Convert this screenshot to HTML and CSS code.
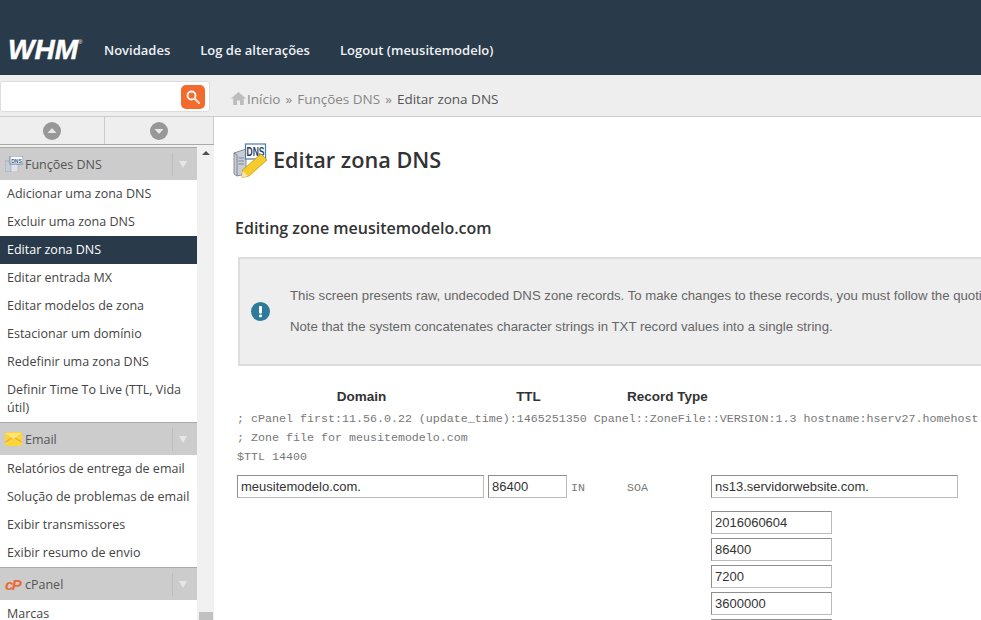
FILE: index.html
```html
<!DOCTYPE html>
<html>
    <head>
        <title>WHM - Editar zona DNS</title>
        <meta charset="UTF-8">
        <link rel="stylesheet" href="styles.css">
    </head>
    <body>
        <header class="topbar">
            <div class="logo">WHM<sup>®</sup></div>
            <nav class="topnav">
                <a>Novidades</a>
                <a>Log de alterações</a>
                <a>Logout (meusitemodelo)</a>
            </nav>
        </header>

        <div class="layout">
            <aside class="sidebar">
                <div class="search">
                    <div class="search-box">
                        <span class="search-btn">
                            <svg width="16" height="16" viewBox="0 0 16 16">
                                <circle cx="6.500" cy="6.500" r="4" fill="none" stroke="#fff" stroke-width="1.800"/>
                                <path d="M9.700 9.700 L14 14" stroke="#f5d9c4" stroke-width="2.400" stroke-linecap="round"/>
                            </svg>
                        </span>
                    </div>
                </div>
                <div class="arrows">
                    <span class="arrow-cell">
                        <svg width="18" height="18" viewBox="0 0 18 18"><circle cx="9" cy="9" r="9" fill="#979797"/><path d="M4.500 11 L9 6 L13.500 11 Z" fill="#e6e6e6"/></svg>
                    </span>
                    <span class="arrow-cell">
                        <svg width="18" height="18" viewBox="0 0 18 18"><circle cx="9" cy="9" r="9" fill="#979797"/><path d="M4.500 7 L9 12 L13.500 7 Z" fill="#e6e6e6"/></svg>
                    </span>
                </div>
                <div class="menu-wrap">
                    <div class="menu">
                        <div class="group">
                            <svg class="group-icon" width="18" height="16" viewBox="0 0 18 16">
                                <rect x="0" y="5" width="7" height="11" fill="#c4ccd6" stroke="#8f9aa8" stroke-width="0.600"/>
                                <rect x="6" y="8" width="7" height="8" fill="#dfe4ea" stroke="#a0a8b2" stroke-width="0.600"/>
                                <rect x="5" y="0" width="13" height="8" fill="#fff" stroke="#50719a" stroke-width="0.800"/>
                                <text x="11.500" y="6.500" class="dns-mini">DNS</text>
                            </svg>
                            <span class="group-name">Funções DNS</span>
                            <span class="group-toggle"></span>
                        </div>
                        <a class="item">Adicionar uma zona DNS</a>
                        <a class="item">Excluir uma zona DNS</a>
                        <a class="item active">Editar zona DNS</a>
                        <a class="item">Editar entrada MX</a>
                        <a class="item">Editar modelos de zona</a>
                        <a class="item">Estacionar um domínio</a>
                        <a class="item">Redefinir uma zona DNS</a>
                        <a class="item">Definir Time To Live (TTL, Vida útil)</a>
                        <div class="group">
                            <svg class="group-icon" width="18" height="14" viewBox="0 0 18 14">
                                <rect x="0" y="0" width="17" height="14" rx="2" fill="#fbd53c"/>
                                <path d="M0.500 10 L8.500 5 L16.500 10" fill="none" stroke="#f3a92e" stroke-width="1.300"/>
                                <path d="M0.500 1 L8.500 7 L16.500 1" fill="#ffe27a"/>
                            </svg>
                            <span class="group-name">Email</span>
                            <span class="group-toggle"></span>
                        </div>
                        <a class="item">Relatórios de entrega de email</a>
                        <a class="item">Solução de problemas de email</a>
                        <a class="item">Exibir transmissores</a>
                        <a class="item">Exibir resumo de envio</a>
                        <div class="group">
                            <span class="cp-logo">cP</span>
                            <span class="group-name">cPanel</span>
                            <span class="group-toggle"></span>
                        </div>
                        <a class="item">Marcas</a>
                    </div>
                    <div class="scrollbar">
                        <span class="scroll-up"></span>
                        <span class="scroll-thumb"></span>
                    </div>
                </div>
            </aside>

            <main class="main">
                <div class="breadcrumb">
                    <svg width="15" height="13" viewBox="0 0 15 13">
                        <path d="M7.500 0 L15 6.500 L12.800 6.500 L12.800 13 L9 13 L9 8.500 L6 8.500 L6 13 L2.200 13 L2.200 6.500 L0 6.500 Z" fill="#bdbdbd"/>
                    </svg>
                    <a>Início</a><span class="sep">»</span><a>Funções DNS</a><span class="sep">»</span><span class="current">Editar zona DNS</span>
                </div>

                <div class="content">
                    <div class="title">
                        <svg width="35" height="35" viewBox="0 0 35 35">
                            <path d="M1 10 L13 6 L13 31 L4 33 L1 31 Z" fill="#c9ced6" stroke="#6f7782" stroke-width="0.800"/>
                            <path d="M1 10 L4 12 L4 33" fill="none" stroke="#6f7782" stroke-width="0.800"/>
                            <path d="M5.500 15 H11 M5.500 18 H11 M5.500 21 H11" stroke="#7d8794" stroke-width="1"/>
                            <rect x="12.500" y="1" width="20" height="15" fill="#fff" stroke="#4d7ba8" stroke-width="1.200"/>
                            <text x="13.500" y="13" class="dns-big" textLength="18" lengthAdjust="spacingAndGlyphs">DNS</text>
                            <path d="M28 11 L34 17 L16 33 L9 34.500 L9.500 27 Z" fill="#f6cb2c" stroke="#c99a12" stroke-width="0.800"/>
                            <path d="M9.500 28 L9 34.500 L15 33 Z" fill="#f5e6bd"/>
                        </svg>
                        <h1>Editar zona DNS</h1>
                    </div>

                    <h2>Editing zone meusitemodelo.com</h2>

                    <div class="message">
                        <svg class="message-icon" width="19" height="19" viewBox="0 0 19 19">
                            <circle cx="9.500" cy="9.500" r="9.500" fill="#2e7a9a"/>
                            <rect x="8" y="4" width="3" height="7.500" rx="1" fill="#fff"/>
                            <rect x="8" y="12.500" width="3" height="2.800" rx="1" fill="#fff"/>
                        </svg>
                        <div class="message-text">
                            <p>This screen presents raw, undecoded DNS zone records. To make changes to these records, you must follow the quoting rules.</p>
                            <p>Note that the system concatenates character strings in TXT record values into a single string.</p>
                        </div>
                    </div>

                    <div class="zone-head">
                        <span>Domain</span>
                        <span>TTL</span>
                        <span></span>
                        <span class="type-head">Record Type</span>
                    </div>

                    <div class="raw">; cPanel first:11.56.0.22 (update_time):1465251350 Cpanel::ZoneFile::VERSION:1.3 hostname:hserv27.homehost.com.br</div>
                    <div class="raw">; Zone file for meusitemodelo.com</div>
                    <div class="raw">$TTL 14400</div>

                    <div class="zone-row">
                        <input class="field wide" type="text" value="meusitemodelo.com.">
                        <input class="field ttl" type="text" value="86400">
                        <span class="raw-cell">IN</span>
                        <span class="raw-cell">SOA</span>
                        <div class="record">
                            <input class="field wide" type="text" value="ns13.servidorwebsite.com.">
                            <div class="soa-values">
                                <input class="field short" type="text" value="2016060604">
                                <input class="field short" type="text" value="86400">
                                <input class="field short" type="text" value="7200">
                                <input class="field short" type="text" value="3600000">
                                <input class="field short" type="text" value="86400">
                            </div>
                        </div>
                    </div>
                </div>
            </main>
        </div>
    </body>
</html>
```

FILE: styles.css
```css
html, body {
    height: 100%;
}

body {
    margin: 0;
    height: 620px;
    overflow: hidden;
    display: flex;
    flex-direction: column;
    font-family: "Open Sans", Arial, sans-serif;
    background: #fff;
    color: #333;
}

.topbar {
    height: 75px;
    flex: none;
    display: flex;
    align-items: flex-end;
    background: #293a4a;
    color: #fff;
    box-sizing: border-box;
    padding: 0 0 12px 8px;
}

.logo {
    width: 96px;
    font-family: "Liberation Sans", Arial, sans-serif;
    font-size: 28px;
    font-weight: bold;
    font-style: italic;
    line-height: 26px;
    -webkit-text-stroke: 0.5px #fff;
}

.logo sup {
    font-size: 6px;
    font-style: normal;
    font-weight: normal;
    line-height: 0;
    vertical-align: 15px;
    -webkit-text-stroke: 0;
}

.topnav {
    display: flex;
    gap: 30px;
    font-size: 13px;
    font-weight: 600;
    line-height: 26px;
    color: #eef1f3;
}

.layout {
    flex: 1;
    display: flex;
    min-height: 0;
}

.sidebar {
    width: 214px;
    flex: none;
    display: flex;
    flex-direction: column;
    background: #f1f1f1;
}

.search {
    height: 42px;
    flex: none;
    box-sizing: border-box;
    padding: 6px 4px 5px 0;
    background: #eee;
    border-bottom: 1px solid #ccc;
}

.search-box {
    height: 31px;
    box-sizing: border-box;
    display: flex;
    justify-content: flex-end;
    align-items: center;
    padding-right: 4px;
    background: #fff;
    border: 1px solid #ddd;
    border-radius: 3px;
}

.search-btn {
    width: 24px;
    height: 24px;
    display: flex;
    align-items: center;
    justify-content: center;
    background: #f26a2e;
    border-radius: 5px;
}

.arrows {
    height: 28px;
    flex: none;
    box-sizing: border-box;
    display: flex;
    background: #eee;
    border-bottom: 1px solid #aaa;
    border-right: 1px solid #ccc;
}

.arrow-cell {
    flex: 1;
    display: flex;
    align-items: center;
    justify-content: center;
}

.arrow-cell:first-child {
    flex: none;
    width: 104px;
}

.arrow-cell + .arrow-cell {
    border-left: 1px solid #ccc;
}

.menu-wrap {
    flex: 1;
    display: flex;
    min-height: 0;
    margin-top: 2px;
    overflow: hidden;
}

.menu {
    width: 197px;
    flex: none;
    background: #fff;
}

.group {
    height: 33px;
    box-sizing: border-box;
    display: flex;
    align-items: center;
    padding-left: 5px;
    background: #ccc;
    border-top: 1px solid #aaa;
    font-size: 12.5px;
    color: #555;
}

.group-icon {
    flex: none;
    margin-right: 2px;
}

.group-name {
    flex: 1;
}

.group-toggle {
    width: 25px;
    height: 23px;
    flex: none;
    box-sizing: border-box;
    position: relative;
    border-left: 1px solid #bdbdbd;
}

.group-toggle::after {
    content: "";
    position: absolute;
    left: 6px;
    top: 8px;
    border-left: 4px solid transparent;
    border-right: 4px solid transparent;
    border-top: 7px solid #e6e6e6;
}

.cp-logo {
    width: 20px;
    flex: none;
    font-family: "Liberation Sans", Arial, sans-serif;
    font-size: 15px;
    font-weight: bold;
    font-style: italic;
    letter-spacing: -1.5px;
    color: #ea6a35;
}

.item {
    display: block;
    padding: 5px 7px;
    font-size: 12.5px;
    line-height: 18px;
    color: #444;
}

.item.active {
    background: #293a4a;
    color: #fff;
    font-weight: 500;
}

.dns-mini {
    font-family: "Liberation Sans", Arial, sans-serif;
    font-size: 5px;
    font-weight: bold;
    text-anchor: middle;
    fill: #3a5b85;
}

.scrollbar {
    flex: 1;
    display: flex;
    flex-direction: column;
    align-items: center;
    justify-content: space-between;
    padding: 4px 0 0;
}

.scroll-up {
    border-left: 4px solid transparent;
    border-right: 4px solid transparent;
    border-bottom: 4px solid #505050;
}

.scroll-thumb {
    width: 14px;
    height: 8px;
    background: #c1c1c1;
}

.main {
    flex: 1;
    min-width: 0;
    overflow: hidden;
}

.breadcrumb {
    height: 42px;
    box-sizing: border-box;
    display: flex;
    align-items: center;
    padding: 6px 0 0 17px;
    background: #eee;
    border-bottom: 1px solid #ccc;
    font-size: 13.5px;
    color: #888;
}

.breadcrumb svg {
    margin-right: 1px;
}

.sep {
    margin: 0 5px;
}

.current {
    color: #555;
}

.content {
    padding: 26px 0 0 19px;
    white-space: nowrap;
}

.title {
    display: flex;
    align-items: center;
    gap: 5px;
    height: 35px;
}

h1 {
    margin: 0 0 3px;
    font-size: 21.7px;
    font-weight: 600;
    color: #333;
}

.dns-big {
    font-family: "Liberation Sans", Arial, sans-serif;
    font-size: 13px;
    font-weight: bold;
    fill: #1f3f66;
}

h2 {
    margin: 40px 0 0 2px;
    font-size: 16px;
    line-height: 20px;
    font-weight: 600;
    color: #333;
}

.message {
    width: 1000px;
    height: 109px;
    box-sizing: border-box;
    display: flex;
    align-items: center;
    margin: 19px 0 0 5px;
    padding-left: 11px;
    background: #eee;
    border: 2px solid #ddd;
}

.message-icon {
    flex: none;
    margin-right: 20px;
}

.message-text {
    font-family: "Liberation Sans", Arial, sans-serif;
    font-size: 13.2px;
    color: #666;
    margin-top: -1px;
}

.message-text p {
    margin: 0;
    line-height: 15px;
}

.message-text p + p {
    margin-top: 16px;
}

.zone-head {
    display: grid;
    grid-template-columns: 251px 83px 57px 84px;
    margin: 22px 0 0 3px;
    font-family: "Liberation Sans", Arial, sans-serif;
    font-size: 13.5px;
    font-weight: bold;
    line-height: 18px;
    text-align: center;
}

.type-head {
    text-align: left;
}

.raw, .raw-cell {
    font-family: "Liberation Mono", "Courier New", monospace;
    font-size: 11.67px;
    line-height: 19px;
    color: #777;
}

.raw {
    margin-left: 4px;
}

.zone-head + .raw {
    margin-top: 4px;
}

.zone-row {
    display: grid;
    grid-template-columns: 251px 83px 56px 84px 1fr;
    margin: 8px 0 0 4px;
}

.field {
    display: block;
    height: 23px;
    box-sizing: border-box;
    margin: 0;
    padding: 1px 3px;
    font-family: "Liberation Sans", Arial, sans-serif;
    font-size: 13px;
    color: #333;
    background: #fff;
    border: 1px solid #bbb;
    border-top-color: #8e8e8e;
    border-left-color: #8e8e8e;
}

.field.wide {
    width: 247px;
}

.field.ttl {
    width: 79px;
}

.field.short {
    width: 121px;
}

.raw-cell {
    line-height: 26px;
}

.soa-values {
    display: flex;
    flex-direction: column;
    gap: 4px;
    margin-top: 13px;
}
```
